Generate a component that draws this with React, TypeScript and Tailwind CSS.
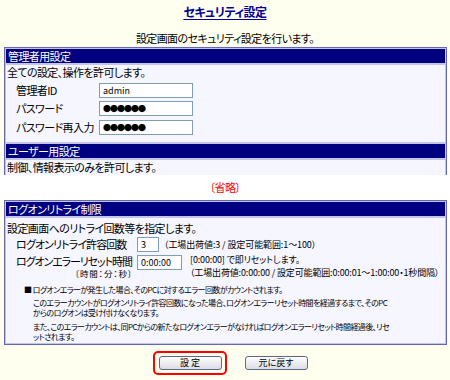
import React from "react";

const F = "font-['Noto_Sans_CJK_JP','Noto_Sans_CJK_SC',sans-serif] [font-feature-settings:'palt']";
const T = "text-[11px] tracking-[-0.6px] whitespace-nowrap";
const S = "text-[8px] tracking-[-0.6px] whitespace-nowrap";

function Header({ children }: { children: React.ReactNode }) {
  return (
    <div className={`h-[14px] bg-[#000080] pl-[2px] leading-[14px] text-white ${T}`}>
      {children}
    </div>
  );
}

function Input({ w, value, pw }: { w: number; value: string; pw?: boolean }) {
  return (
    <div
      className="flex h-[15px] shrink-0 items-center border border-[#7f9db9] bg-white pl-[3px] text-[9px] leading-[13px] tracking-normal text-black"
      style={{ width: w }}
    >
      {pw ? <span className="text-[8px] tracking-[-1px]">●●●●●●</span> : value}
    </div>
  );
}

function Btn({ children }: { children: React.ReactNode }) {
  return (
    <div className="flex h-[14px] w-[63px] items-center justify-center rounded-[3px] border border-[#5a6a86] bg-gradient-to-b from-[#ffffff] to-[#dcdce4] text-[9px] leading-[12px] text-black">
      {children}
    </div>
  );
}

export default function App() {
  return (
    <div className={`${F} h-[380px] w-[450px] overflow-hidden bg-[#ffffef] text-black`}>
      {/* Title */}
      <div className="flex h-[20px] items-end justify-center">
        <span className="text-[12px] font-bold leading-[16px] tracking-[-0.5px] text-[#000099] underline underline-offset-2">
          セキュリティ設定
        </span>
      </div>
      <div className={`mt-[11px] flex h-[14px] justify-center leading-[14px] ${T}`}>
        設定画面のセキュリティ設定を行います。
      </div>

      {/* Table 1 */}
      <div className="ml-[4px] mt-[2px] w-[443px] border border-b-0 border-[#6666b3] bg-[#c4c4e6] px-px pt-px">
        <div className="flex flex-col gap-[2px]">
          <Header>管理者用設定</Header>
          <div className={`bg-[#f5f6ff] pb-[5px] pl-[1px] ${T}`}>
            <div className="h-[15px] leading-[15px]">全ての設定、操作を許可します。</div>
            <div className="mt-[1px] flex h-[18px] items-center pl-[9px]">
              <span className="w-[83px]">管理者ID</span>
              <Input w={94} value="admin" />
            </div>
            <div className="flex h-[19px] items-center pl-[9px]">
              <span className="w-[83px]">パスワード</span>
              <Input w={94} value="" pw />
            </div>
            <div className="flex h-[19px] items-center pl-[9px]">
              <span className="w-[83px]">パスワード再入力</span>
              <Input w={94} value="" pw />
            </div>
          </div>
          <Header>ユーザー用設定</Header>
          <div className={`h-[15px] bg-[#f5f6ff] pl-[1px] leading-[15px] ${T}`}>
            制御、情報表示のみを許可します。
          </div>
        </div>
      </div>

      {/* omitted band */}
      <div className={`flex h-[25px] items-center justify-center bg-white text-[#ff0000] ${T}`}>
        〔省略〕
      </div>

      {/* Table 3 */}
      <div className="ml-[4px] w-[443px] border border-[#6666b3] bg-[#c4c4e6] p-px">
        <div className="flex flex-col gap-[2px]">
          <Header>ログオンリトライ制限</Header>
          <div className={`h-[125px] bg-[#f5f6ff] pl-[1px] pt-[3px] ${T}`}>
            <div className="h-[15px] leading-[15px]">設定画面へのリトライ回数等を指定します。</div>
            <div className="flex h-[17px] items-center pl-[9px]">
              <span className="w-[121px] tracking-[-0.9px]">ログオンリトライ許容回数</span>
              <Input w={22} value="3" />
              <span className="ml-[5px] whitespace-nowrap text-[9px] tracking-[-0.1px]">（工場出荷値:3 / 設定可能範囲:1〜100）</span>
            </div>
            <div className="flex pl-[9px]">
              <div className="flex w-[121px] shrink-0 flex-col">
                <span className="mt-[2px] h-[12px] leading-[12px] tracking-[-1.1px]">ログオンエラーリセット時間</span>
                <span className="mt-[2px] pr-[4px] text-right text-[8.5px] leading-[9px] tracking-[0.9px]">〔時間：分：秒〕</span>
              </div>
              <div className="mt-[2px]">
                <Input w={45} value="0:00:00" />
              </div>
              <div className="ml-[8px] flex flex-col whitespace-nowrap text-[9px] leading-[13px] tracking-[-0.15px]">
                <span>[0:00:00] で即リセットします。</span>
                <span>（工場出荷値:0:00:00 / 設定可能範囲:0:00:01〜1:00:00・1秒間隔）</span>
              </div>
            </div>
            <div className={`mt-[6px] pl-[17px] leading-[10px] ${S}`}>
              <div>■ ログオンエラーが発生した場合、そのPCに対するエラー回数がカウントされます。</div>
              <div className="mt-[3px] pl-[9px]">
                このエラーカウントがログオンリトライ許容回数になった場合、ログオンエラーリセット時間を経過するまで、そのPC
                <br />
                からのログオンは受け付けなくなります。
              </div>
              <div className="mt-[4px] pl-[9px]">
                また、このエラーカウントは、同PCからの新たなログオンエラーがなければログオンエラーリセット時間経過後、リセ
                <br />
                ットされます。
              </div>
            </div>
          </div>
        </div>
      </div>

      {/* Buttons */}
      <div className="mt-[6px] flex items-center justify-center gap-[18px] pl-[10px]">
        <div className="rounded-[5px] border-2 border-[#ff0000] py-[3px] pl-[4px] pr-[3px]">
          <Btn>設 定</Btn>
        </div>
        <Btn>元に戻す</Btn>
      </div>
    </div>
  );
}
